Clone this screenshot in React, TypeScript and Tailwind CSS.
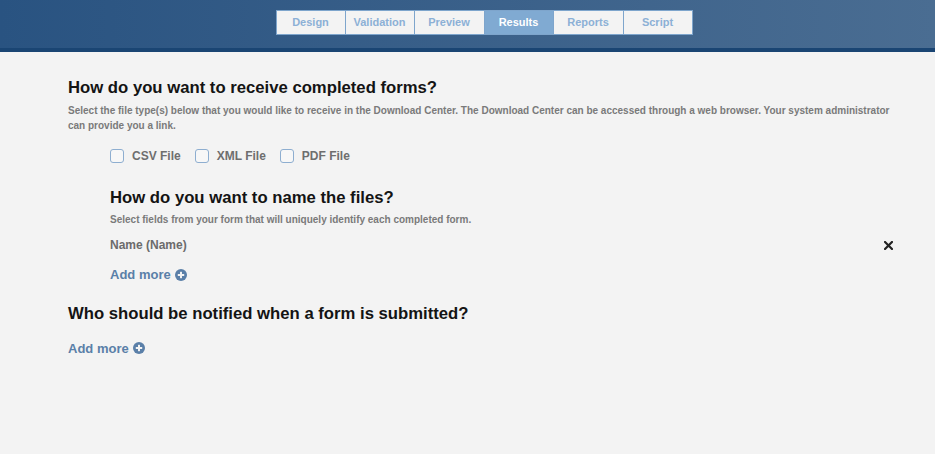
import React from "react";

const tabs: [string, string][] = [
  ["Design", "w-[68px]"],
  ["Validation", "w-[69px]"],
  ["Preview", "w-[70px]"],
  ["Results", "w-[69px]"],
  ["Reports", "w-[70px]"],
  ["Script", "w-[69px]"],
];

function Check({ label }: { label: string }) {
  return (
    <label className="flex items-center gap-[8px] mr-[14px]">
      <span className="w-[14px] h-[14px] rounded-[3px] border border-[#8eaed0] bg-[#f7f7f7]" />
      <span className="text-[12px] font-bold text-[#6e6e6e]">{label}</span>
    </label>
  );
}

function AddMore() {
  return (
    <div className="flex items-center gap-[4px] text-[13px] font-bold text-[#5a7fa8]">
      <span>Add more</span>
      <svg width="12" height="12" viewBox="0 0 12 12">
        <circle cx="6" cy="6" r="6" fill="#5a7fa8" />
        <rect x="2.8" y="5" width="6.4" height="2" fill="#f3f3f3" />
        <rect x="5" y="2.8" width="2" height="6.4" fill="#f3f3f3" />
      </svg>
    </div>
  );
}

export default function App() {
  return (
    <div className="w-[935px] h-[454px] bg-[#f3f3f3] font-['Liberation_Sans',Arial,sans-serif] overflow-hidden">
      <div className="h-[48px] bg-gradient-to-r from-[#295381] to-[#4a6d92] flex justify-center pt-[10px]">
        <div className="flex h-[25px] border border-[#7ea5cc] bg-[#f3f3f3] ml-[33px]">
          {tabs.map(([t, w], i) => (
            <div
              key={t}
              className={
                w +
                " flex items-center justify-center text-[11px] font-bold " +
                (i > 0 ? "border-l border-[#7ea5cc] " : "") +
                (t === "Results" ? "bg-[#80aad2] text-white" : "text-[#8cb0d6]")
              }
            >
              {t}
            </div>
          ))}
        </div>
      </div>
      <div className="h-[4px] bg-[#1a4573]" />
      <div className="pl-[68px] pr-[40px] pt-[25px]">
        <h2 className="text-[16.7px] font-bold text-[#141414] leading-[22px]">How do you want to receive completed forms?</h2>
        <p className="mt-[4px] text-[10px] font-bold text-[#7a7a7a] leading-[15px]">
          Select the file type(s) below that you would like to receive in the Download Center. The Download Center can be accessed through a web browser. Your system administrator can provide you a link.
        </p>
        <div className="flex items-center pl-[42px] mt-[14px]">
          <Check label="CSV File" />
          <Check label="XML File" />
          <Check label="PDF File" />
        </div>
        <div className="pl-[42px] mt-[22px]">
          <h3 className="text-[16.7px] font-bold text-[#141414] leading-[22px]">How do you want to name the files?</h3>
          <p className="mt-[3px] text-[10px] font-bold text-[#7a7a7a] leading-[15px]">
            Select fields from your form that will uniquely identify each completed form.
          </p>
          <div className="flex items-center justify-between mt-[10px] h-[16px]">
            <span className="text-[12px] font-bold text-[#6b6b6b]">Name (Name)</span>
            <svg width="9" height="9" viewBox="0 0 9 9" className="mr-[2px]">
              <path d="M1 1 L8 8 M8 1 L1 8" stroke="#222" strokeWidth="2.2" strokeLinecap="square" />
            </svg>
          </div>
          <div className="mt-[12px]">
            <AddMore />
          </div>
        </div>
        <h2 className="mt-[18px] text-[16.7px] font-bold text-[#141414] leading-[22px]">Who should be notified when a form is submitted?</h2>
        <div className="mt-[14px]">
          <AddMore />
        </div>
      </div>
    </div>
  );
}
